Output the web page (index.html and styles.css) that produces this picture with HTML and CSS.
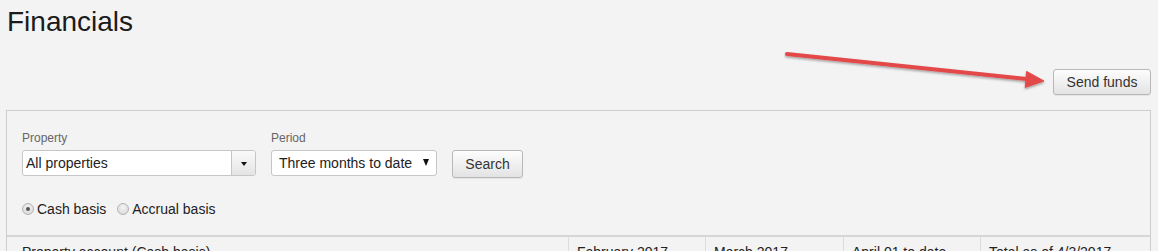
FILE: index.html
```html
<!DOCTYPE html>
<html>
<head>
<meta charset="utf-8">
<link rel="stylesheet" href="styles.css">
</head>
<body>
<h1 class="title">Financials</h1>
<div class="toolbar">
  <button class="btn btn-send">Send funds</button>
</div>
<div class="panel">
  <div class="filters">
    <div class="filter-row">
      <div class="field">
        <div class="label">Property</div>
        <div class="combo">
          <span class="combo-text">All properties</span>
          <span class="combo-btn"><span class="tri-small"></span></span>
        </div>
      </div>
      <div class="field">
        <div class="label">Period</div>
        <div class="select">
          <span class="select-text">Three months to date</span>
          <span class="tri"></span>
        </div>
      </div>
      <button class="btn btn-search">Search</button>
    </div>
    <div class="radio-row">
      <label class="radio"><span class="radio-dot checked"></span>Cash basis</label>
      <label class="radio"><span class="radio-dot"></span>Accrual basis</label>
    </div>
  </div>
  <div class="table-head">
    <div class="th th-first">Property account (Cash basis)</div>
    <div class="th">February 2017</div>
    <div class="th">March 2017</div>
    <div class="th">April 01 to date</div>
    <div class="th">Total as of 4/3/2017</div>
  </div>
</div>
<svg class="annot" width="1158" height="251" viewBox="0 0 1158 251">
  <defs>
    <filter id="sh" x="-10%" y="-50%" width="120%" height="200%">
      <feDropShadow dx="0" dy="1.5" stdDeviation="1.2" flood-color="#000" flood-opacity="0.35"/>
    </filter>
  </defs>
  <g filter="url(#sh)" fill="#e34a4a" stroke="#e34a4a">
    <line x1="787" y1="54" x2="1027" y2="79" stroke-width="4" stroke-linecap="round"/>
    <polygon points="1044,81 1026.6,71.4 1025.2,87.4" stroke-width="1" stroke-linejoin="round"/>
  </g>
</svg>
</body>
</html>
```
FILE: styles.css
```css
html, body {
  margin: 0;
  padding: 0;
  background: #f3f3f3;
  font-family: "Liberation Sans", Arial, sans-serif;
  color: #222;
}
body {
  position: relative;
  width: 1158px;
  height: 251px;
  overflow: hidden;
}
.title {
  margin: 6px 0 0 7px;
  font-size: 28px;
  line-height: 32px;
  font-weight: normal;
  color: #1b1b1b;
}
.toolbar {
  display: flex;
  justify-content: flex-end;
  margin: 31px 7px 0 0;
}
.btn {
  font-family: "Liberation Sans", Arial, sans-serif;
  font-size: 14px;
  color: #333;
  background: linear-gradient(#fdfdfd, #e3e3e3);
  border: 1px solid #b8b8b8;
  border-radius: 3px;
  padding: 0;
  margin: 0;
  box-shadow: 0 1px 0 rgba(0,0,0,0.06);
}
.btn-send {
  width: 98px;
  height: 26px;
}
.panel {
  margin: 15px 7px 0 6px;
  border: 1px solid #cdcdcd;
  border-bottom: none;
  background: #f3f3f3;
}
.filters {
  padding: 20px 15px 17px 15px;
}
.filter-row {
  display: flex;
  align-items: flex-end;
  gap: 15px;
}
.field {
  display: flex;
  flex-direction: column;
}
.label {
  font-size: 12px;
  line-height: 15px;
  color: #666;
  margin-bottom: 4px;
}
.combo {
  display: flex;
  width: 234px;
  height: 26px;
  box-sizing: border-box;
  border: 1px solid #c6c6c6;
  border-radius: 3px;
  background: #fff;
  overflow: hidden;
}
.combo-text {
  flex: 1;
  font-size: 14px;
  line-height: 24px;
  padding-left: 3px;
  color: #222;
}
.combo-btn {
  width: 23px;
  border-left: 1px solid #c6c6c6;
  background: linear-gradient(#fafafa, #e4e4e4);
  display: flex;
  align-items: center;
  justify-content: center;
}
.tri-small {
  width: 0;
  height: 0;
  border-left: 3.5px solid transparent;
  border-right: 3.5px solid transparent;
  border-top: 4px solid #111;
  margin-top: 1px;
}
.select {
  display: flex;
  align-items: center;
  width: 166px;
  height: 26px;
  box-sizing: border-box;
  border: 1px solid #c6c6c6;
  border-radius: 3px;
  background: #fff;
  padding: 0 7px 0 7px;
}
.select-text {
  flex: 1;
  font-size: 14px;
  line-height: 24px;
  color: #222;
  white-space: nowrap;
}
.tri {
  width: 0;
  height: 0;
  border-left: 3px solid transparent;
  border-right: 3px solid transparent;
  border-top: 7px solid #111;
  margin-top: -1px;
}
.btn-search {
  width: 71px;
  height: 28px;
  margin-bottom: -2px;
}
.radio-row {
  display: flex;
  gap: 11px;
  margin-top: 24px;
  height: 18px;
  align-items: center;
}
.radio {
  display: flex;
  align-items: center;
  font-size: 14px;
  line-height: 18px;
  color: #222;
}
.radio-dot {
  width: 12px;
  height: 12px;
  box-sizing: border-box;
  border-radius: 50%;
  border: 1px solid #b4b4b4;
  background: radial-gradient(circle at 50% 35%, #f4f4f4, #d4d4d4);
  margin-right: 3px;
  display: flex;
  align-items: center;
  justify-content: center;
}
.radio-dot.checked::after {
  content: "";
  width: 4px;
  height: 4px;
  border-radius: 50%;
  background: #555;
}
.table-head {
  display: grid;
  grid-template-columns: 561px 137px 138px 137px 1fr;
  border-top: 2px solid #d6d6d6;
  background: #f3f3f3;
}
.th {
  font-size: 14px;
  line-height: 20px;
  padding: 5px 8px;
  border-left: 1px solid #dcdcdc;
  color: #222;
  white-space: nowrap;
}
.th-first {
  border-left: none;
  padding-left: 15px;
}
.annot {
  position: absolute;
  left: 0;
  top: 0;
  pointer-events: none;
}
```
